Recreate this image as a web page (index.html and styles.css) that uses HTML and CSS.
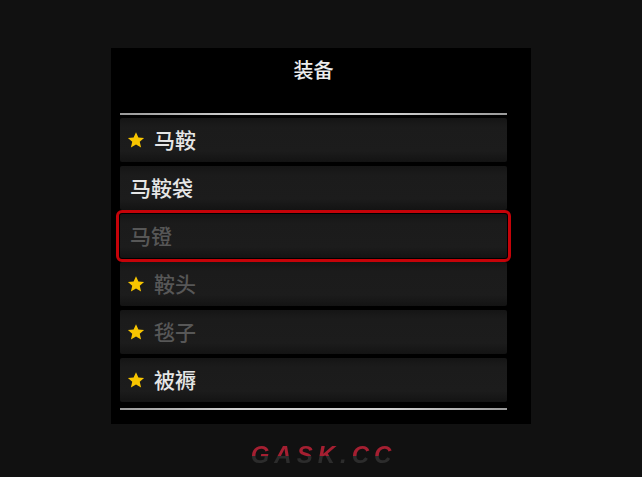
FILE: index.html
```html
<!DOCTYPE html>
<html lang="zh">
<head>
<meta charset="utf-8">
<link rel="stylesheet" href="styles.css">
</head>
<body>
<div class="page">
  <div class="panel">
    <div class="title">装备</div>
    <div class="rule"></div>
    <ul class="list">
      <li class="row"><svg class="star" viewBox="0 0 24 24"><path d="M12 1.5l3.2 7.1 7.6.7-5.8 5.1 1.8 7.6L12 18l-6.8 4 1.8-7.6L1.2 9.3l7.6-.7z"/></svg><span class="name">马鞍</span></li>
      <li class="row plain"><span class="name">马鞍袋</span></li>
      <li class="row plain selected"><span class="name dim">马镫</span></li>
      <li class="row"><svg class="star" viewBox="0 0 24 24"><path d="M12 1.5l3.2 7.1 7.6.7-5.8 5.1 1.8 7.6L12 18l-6.8 4 1.8-7.6L1.2 9.3l7.6-.7z"/></svg><span class="name dim">鞍头</span></li>
      <li class="row"><svg class="star" viewBox="0 0 24 24"><path d="M12 1.5l3.2 7.1 7.6.7-5.8 5.1 1.8 7.6L12 18l-6.8 4 1.8-7.6L1.2 9.3l7.6-.7z"/></svg><span class="name dim">毯子</span></li>
      <li class="row"><svg class="star" viewBox="0 0 24 24"><path d="M12 1.5l3.2 7.1 7.6.7-5.8 5.1 1.8 7.6L12 18l-6.8 4 1.8-7.6L1.2 9.3l7.6-.7z"/></svg><span class="name">被褥</span></li>
    </ul>
    <div class="rule bottom"></div>
  </div>
  <div class="watermark">GASK.CC</div>
</div>
</body>
</html>
```

FILE: styles.css
```css
html, body {
  margin: 0;
  padding: 0;
  background: #111111;
  width: 642px;
  height: 477px;
  overflow: hidden;
}

.page {
  padding-top: 48px;
  font-family: "Noto Sans CJK SC", "Noto Sans", sans-serif;
}

.panel {
  margin-left: 111px;
  width: 387px;
  height: 376px;
  padding: 0 24px 0 9px;
  background: #000;
  box-sizing: content-box;
}

.title {
  height: 65px;
  line-height: 44px;
  text-align: center;
  color: #ececec;
  font-size: 20px;
  font-weight: 500;
}

.rule {
  height: 2px;
  background: linear-gradient(90deg, #9a9a9a, #d0d0d0 30%, #d0d0d0 70%, #9a9a9a);
}

.rule.bottom {
  margin-top: 6px;
}

.list {
  list-style: none;
  margin: 3px 0 0;
  padding: 0;
  display: flex;
  flex-direction: column;
  gap: 4px;
}

.row {
  height: 44px;
  display: flex;
  align-items: center;
  padding-left: 7px;
  gap: 9px;
  background: linear-gradient(180deg, #151515 0%, #1b1b1b 20%, #1c1c1c 75%, #131313 100%);
  border-radius: 2px;
}

.row.plain {
  padding-left: 10px;
}

.row.selected {
  outline: 3px solid #c50309;
  outline-offset: 1px;
  border-radius: 2px;
}

.star {
  width: 18px;
  height: 18px;
  fill: #f8c500;
  flex: none;
}

.name {
  font-size: 21px;
  font-weight: 500;
  color: #e6e6e6;
  line-height: 1;
  margin-top: -1px;
}

.name.dim {
  color: #575757;
}

.watermark {
  margin-top: 19px;
  text-align: center;
  font-family: "Liberation Sans", "DejaVu Sans", sans-serif;
  font-weight: bold;
  font-style: italic;
  font-size: 24px;
  line-height: 24px;
  letter-spacing: 5px;
  padding-left: 5px;
  color: transparent;
  background: linear-gradient(180deg, #a51f31 0%, #a51f31 56%, #2c2c2c 56%, #2c2c2c 100%);
  -webkit-background-clip: text;
  background-clip: text;
  width: max-content;
  margin-left: auto;
  margin-right: auto;
}
```
